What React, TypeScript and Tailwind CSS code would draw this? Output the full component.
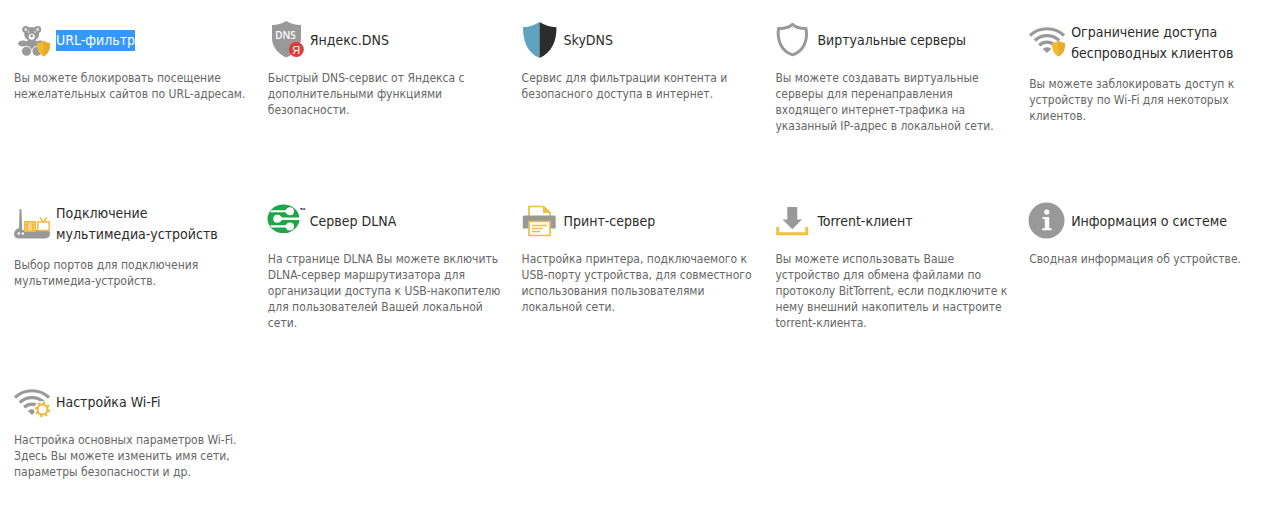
import type { ReactNode } from 'react';

interface Feature {
  id: string;
  title: string[];
  text: string[];
  icon: ReactNode;
  selected?: boolean;
}

function Svg({ children }: { children: ReactNode }) {
  return (
    <svg viewBox="0 0 36 36" className="size-9 shrink-0 overflow-visible" aria-hidden="true">
      {children}
    </svg>
  );
}

function GoldShield() {
  return (
    <>
      <path d="M23 21c3 0 5-1 6.500-2.500C31 20 33 21 36 21c0 6-1 10.500-6.500 13.500C24 31.500 23 27 23 21z" fill="#f3b92e" />
      <path d="M29.500 18.500C31 20 33 21 36 21c0 6-1 10.500-6.500 13.500z" fill="#e5ab2b" />
    </>
  );
}

function WifiArcs() {
  return (
    <>
      <g fill="none" stroke="#999" strokeWidth="3.200">
        <path d="M1 13.500C10.500 4.500 25.500 4.500 35 13.500" />
        <path d="M5.800 18.500c7-6.500 17.400-6.500 24.400 0" />
        <path d="M10.200 23.200c4.700-4 10.900-4 15.600 0" />
      </g>
      <path d="M13.800 27c2.500-2.300 5.900-2.300 8.400 0L18 31z" fill="#999" />
    </>
  );
}

function BearIcon() {
  return (
    <Svg>
      <g fill="#999">
        <circle cx="11.800" cy="7.500" r="3.600" />
        <circle cx="23.600" cy="7.500" r="3.600" />
        <ellipse cx="17.700" cy="12" rx="7.500" ry="7" />
        <ellipse cx="9" cy="21.500" rx="5" ry="3" />
        <ellipse cx="26" cy="21.500" rx="5" ry="3" />
        <ellipse cx="17.700" cy="23" rx="6.500" ry="6" />
      </g>
      <circle cx="11.800" cy="7.500" r="1.500" fill="#ddd" />
      <circle cx="23.600" cy="7.500" r="1.500" fill="#ddd" />
      <circle cx="17.700" cy="14.800" r="3" fill="#fff" />
      <circle cx="17.700" cy="14" r="1.300" fill="#888" />
      <circle cx="14.500" cy="10" r=".8" fill="#fff" />
      <circle cx="20.900" cy="10" r=".8" fill="#fff" />
      <g fill="#999" stroke="#fff" strokeWidth="1">
        <circle cx="12.500" cy="29.300" r="5" />
        <circle cx="23" cy="29.300" r="5" />
      </g>
      <GoldShield />
    </Svg>
  );
}

function YandexDnsIcon() {
  return (
    <Svg>
      <path d="M4 3c5.500 0 10-1.500 14.300-4C22.500 1.500 27 3 33 3v13c0 9-6 15.500-14.700 19.500C10 31.500 4 25 4 16z" fill="#999" />
      <text x="17.500" y="17" textAnchor="middle" fill="#fff" fontSize="10" fontWeight="600" fontFamily="Open Sans, sans-serif">
        DNS
      </text>
      <circle cx="28.300" cy="27.500" r="7.500" fill="#e03a3a" />
      <text x="28.300" y="31.500" textAnchor="middle" fill="#fff" fontSize="11" fontFamily="Liberation Sans, sans-serif">
        Я
      </text>
    </Svg>
  );
}

function SkyDnsIcon() {
  return (
    <Svg>
      <path d="M17.500 0C13 3 7 5 1 5.300c0 14 4 25.200 16.500 30.700z" fill="#5fa3c3" />
      <path d="M17.500 0C22 3 28 5 34.500 5.300c0 14-4.500 25.200-17 30.700z" fill="#2b2c2b" />
    </Svg>
  );
}

function ShieldOutlineIcon() {
  return (
    <Svg>
      <path
        d="M17.500 2.300c3.300 3 7.500 4.400 13.500 4.200 2 11.500-2 22.500-13.500 26.300C6 29 2 18 3.500 6.500c6 .2 10.700-1.200 14-4.200z"
        fill="none"
        stroke="#999"
        strokeWidth="3"
        strokeLinejoin="round"
      />
    </Svg>
  );
}

function WifiShieldIcon() {
  return (
    <Svg>
      <WifiArcs />
      <GoldShield />
    </Svg>
  );
}

function RouterIcon() {
  return (
    <Svg>
      <path d="M5.500 7c0-1.500 2-1.500 2 0l.8 20H31c3 0 5 1 5 3.500 0 3-2 5-6 5H5C2 35.500 0 34 0 31c0-3 2-5 5-6z" fill="#999" />
      <circle cx="4.800" cy="30.500" r="1.200" fill="#fff" />
      <circle cx="8.800" cy="30.500" r="1.200" fill="#fff" />
      <g fill="#fff" stroke="#f0b93c" strokeWidth="1.400">
        <path d="M10.800 18.800h10.500v9.500H10.800z" fill="#f7d98c" />
        <path d="M13.500 19v9M18.500 19v9M11 22h2.500M18.500 22H21M11 25h2.500M18.500 25H21" />
        <path d="M26 14.500l3.300 4.500 3.700-4.500" fill="none" />
        <path d="M23.800 19h11.400v8.500H23.800z" />
      </g>
    </Svg>
  );
}

function DlnaIcon() {
  return (
    <Svg>
      <ellipse cx="15.500" cy="15.800" rx="16" ry="14.300" fill="#1fa64a" />
      <g fill="#fff">
        <circle cx="22" cy="8.200" r="4" />
        <circle cx="9.300" cy="15.800" r="4" />
        <circle cx="22" cy="23.400" r="4" />
        <path d="M20 5.500l-3 1.700H3.500L2 9.300h15l3 1.700z" />
        <path d="M11 12.600l3.500 2H32v2.400H14.500l-3.500 2z" />
        <path d="M20 20.700l-3 1.600H2l1.500 2.100H17l3 1.700z" />
      </g>
      <path d="M32.300 5.500h2M33.300 5.500v1.500M35 7V5.500l.8 1 .8-1V7" fill="none" stroke="#333" strokeWidth=".9" />
    </Svg>
  );
}

function PrinterIcon() {
  return (
    <Svg>
      <path d="M7 14V3.500h14.500L28 9.500V14" fill="#fff" stroke="#edbd45" strokeWidth="1.700" />
      <path d="M21 3v7h7.500z" fill="#edbd45" />
      <path d="M2.500 12.500h29.500c1 0 1.700.7 1.700 1.700V25.500H.8V14.200c0-1 .7-1.700 1.700-1.700z" fill="#999" />
      <path d="M7 18.500h21v14H7z" fill="#fff" stroke="#edbd45" strokeWidth="1.700" />
      <path d="M10 22.500h15M10 25.500h11M10 28.500h8" stroke="#edbd45" strokeWidth="1.600" />
    </Svg>
  );
}

function DownloadIcon() {
  return (
    <Svg>
      <path d="M12.300 4h10v12.500H27L17.300 26.300 7.500 16.500h4.800z" fill="#999" />
      <path d="M2.700 24v6.800h29V24" fill="none" stroke="#f0c23c" strokeWidth="3" />
    </Svg>
  );
}

function InfoIcon() {
  return (
    <Svg>
      <circle cx="17.500" cy="17.500" r="18" fill="#999" />
      <circle cx="17.800" cy="9" r="2.600" fill="#fff" />
      <path d="M13.500 14h6.700v11.300h2.300v2H13.300v-2h2.500V16h-2.300z" fill="#fff" />
    </Svg>
  );
}

function WifiGearIcon() {
  return (
    <Svg>
      <WifiArcs />
      <circle cx="28.500" cy="25.500" r="8.500" fill="#fff" />
      <circle cx="28.500" cy="25.500" r="6.600" fill="none" stroke="#f0b93c" strokeWidth="2.200" strokeDasharray="2.600 2.580" />
      <circle cx="28.500" cy="25.500" r="4.900" fill="#fff" stroke="#f0b93c" strokeWidth="2" />
    </Svg>
  );
}

const features: Feature[] = [
  {
    id: 'url-filter',
    title: ['URL-фильтр'],
    text: ['Вы можете блокировать посещение', 'нежелательных сайтов по URL-адресам.'],
    icon: <BearIcon />,
    selected: true,
  },
  {
    id: 'yandex-dns',
    title: ['Яндекс.DNS'],
    text: ['Быстрый DNS-сервис от Яндекса с', 'дополнительными функциями', 'безопасности.'],
    icon: <YandexDnsIcon />,
  },
  {
    id: 'skydns',
    title: ['SkyDNS'],
    text: ['Сервис для фильтрации контента и', 'безопасного доступа в интернет.'],
    icon: <SkyDnsIcon />,
  },
  {
    id: 'virtual-servers',
    title: ['Виртуальные серверы'],
    text: [
      'Вы можете создавать виртуальные',
      'серверы для перенаправления',
      'входящего интернет-трафика на',
      'указанный IP-адрес в локальной сети.',
    ],
    icon: <ShieldOutlineIcon />,
  },
  {
    id: 'wifi-access',
    title: ['Ограничение доступа', 'беспроводных клиентов'],
    text: ['Вы можете заблокировать доступ к', 'устройству по Wi-Fi для некоторых', 'клиентов.'],
    icon: <WifiShieldIcon />,
  },
  {
    id: 'multimedia',
    title: ['Подключение', 'мультимедиа-устройств'],
    text: ['Выбор портов для подключения', 'мультимедиа-устройств.'],
    icon: <RouterIcon />,
  },
  {
    id: 'dlna',
    title: ['Сервер DLNA'],
    text: [
      'На странице DLNA Вы можете включить',
      'DLNA-сервер маршрутизатора для',
      'организации доступа к USB-накопителю',
      'для пользователей Вашей локальной',
      'сети.',
    ],
    icon: <DlnaIcon />,
  },
  {
    id: 'print-server',
    title: ['Принт-сервер'],
    text: [
      'Настройка принтера, подключаемого к',
      'USB-порту устройства, для совместного',
      'использования пользователями',
      'локальной сети.',
    ],
    icon: <PrinterIcon />,
  },
  {
    id: 'torrent',
    title: ['Torrent-клиент'],
    text: [
      'Вы можете использовать Ваше',
      'устройство для обмена файлами по',
      'протоколу BitTorrent, если подключите к',
      'нему внешний накопитель и настроите',
      'torrent-клиента.',
    ],
    icon: <DownloadIcon />,
  },
  {
    id: 'system-info',
    title: ['Информация о системе'],
    text: ['Сводная информация об устройстве.'],
    icon: <InfoIcon />,
  },
  {
    id: 'wifi-settings',
    title: ['Настройка Wi-Fi'],
    text: ['Настройка основных параметров Wi-Fi.', 'Здесь Вы можете изменить имя сети,', 'параметры безопасности и др.'],
    icon: <WifiGearIcon />,
  },
];

function FeatureCard({ feature }: { feature: Feature }) {
  return (
    <article>
      <a href={`#${feature.id}`} className="flex items-start gap-1.5">
        {feature.icon}
        <h2 className="flex min-h-9 flex-col justify-center text-sm leading-[21px] whitespace-nowrap text-[#2b2b2b]">
          {feature.title.map((line) => (
            <span key={line} className={feature.selected ? 'bg-[#3399ff] text-white' : undefined}>
              {line}
            </span>
          ))}
        </h2>
      </a>
      <p className="mt-3 text-xs leading-4 whitespace-pre text-[#666]">{feature.text.join('\n')}</p>
    </article>
  );
}

export default function App() {
  return (
    <main className="grid auto-rows-[minmax(133px,auto)] grid-cols-5 gap-x-6 gap-y-12 bg-white pt-[22px] pr-[21px] pl-3.5 font-['DejaVu_Sans_Condensed','DejaVu_Sans',sans-serif]">
      {features.map((feature) => (
        <FeatureCard key={feature.id} feature={feature} />
      ))}
    </main>
  );
}
